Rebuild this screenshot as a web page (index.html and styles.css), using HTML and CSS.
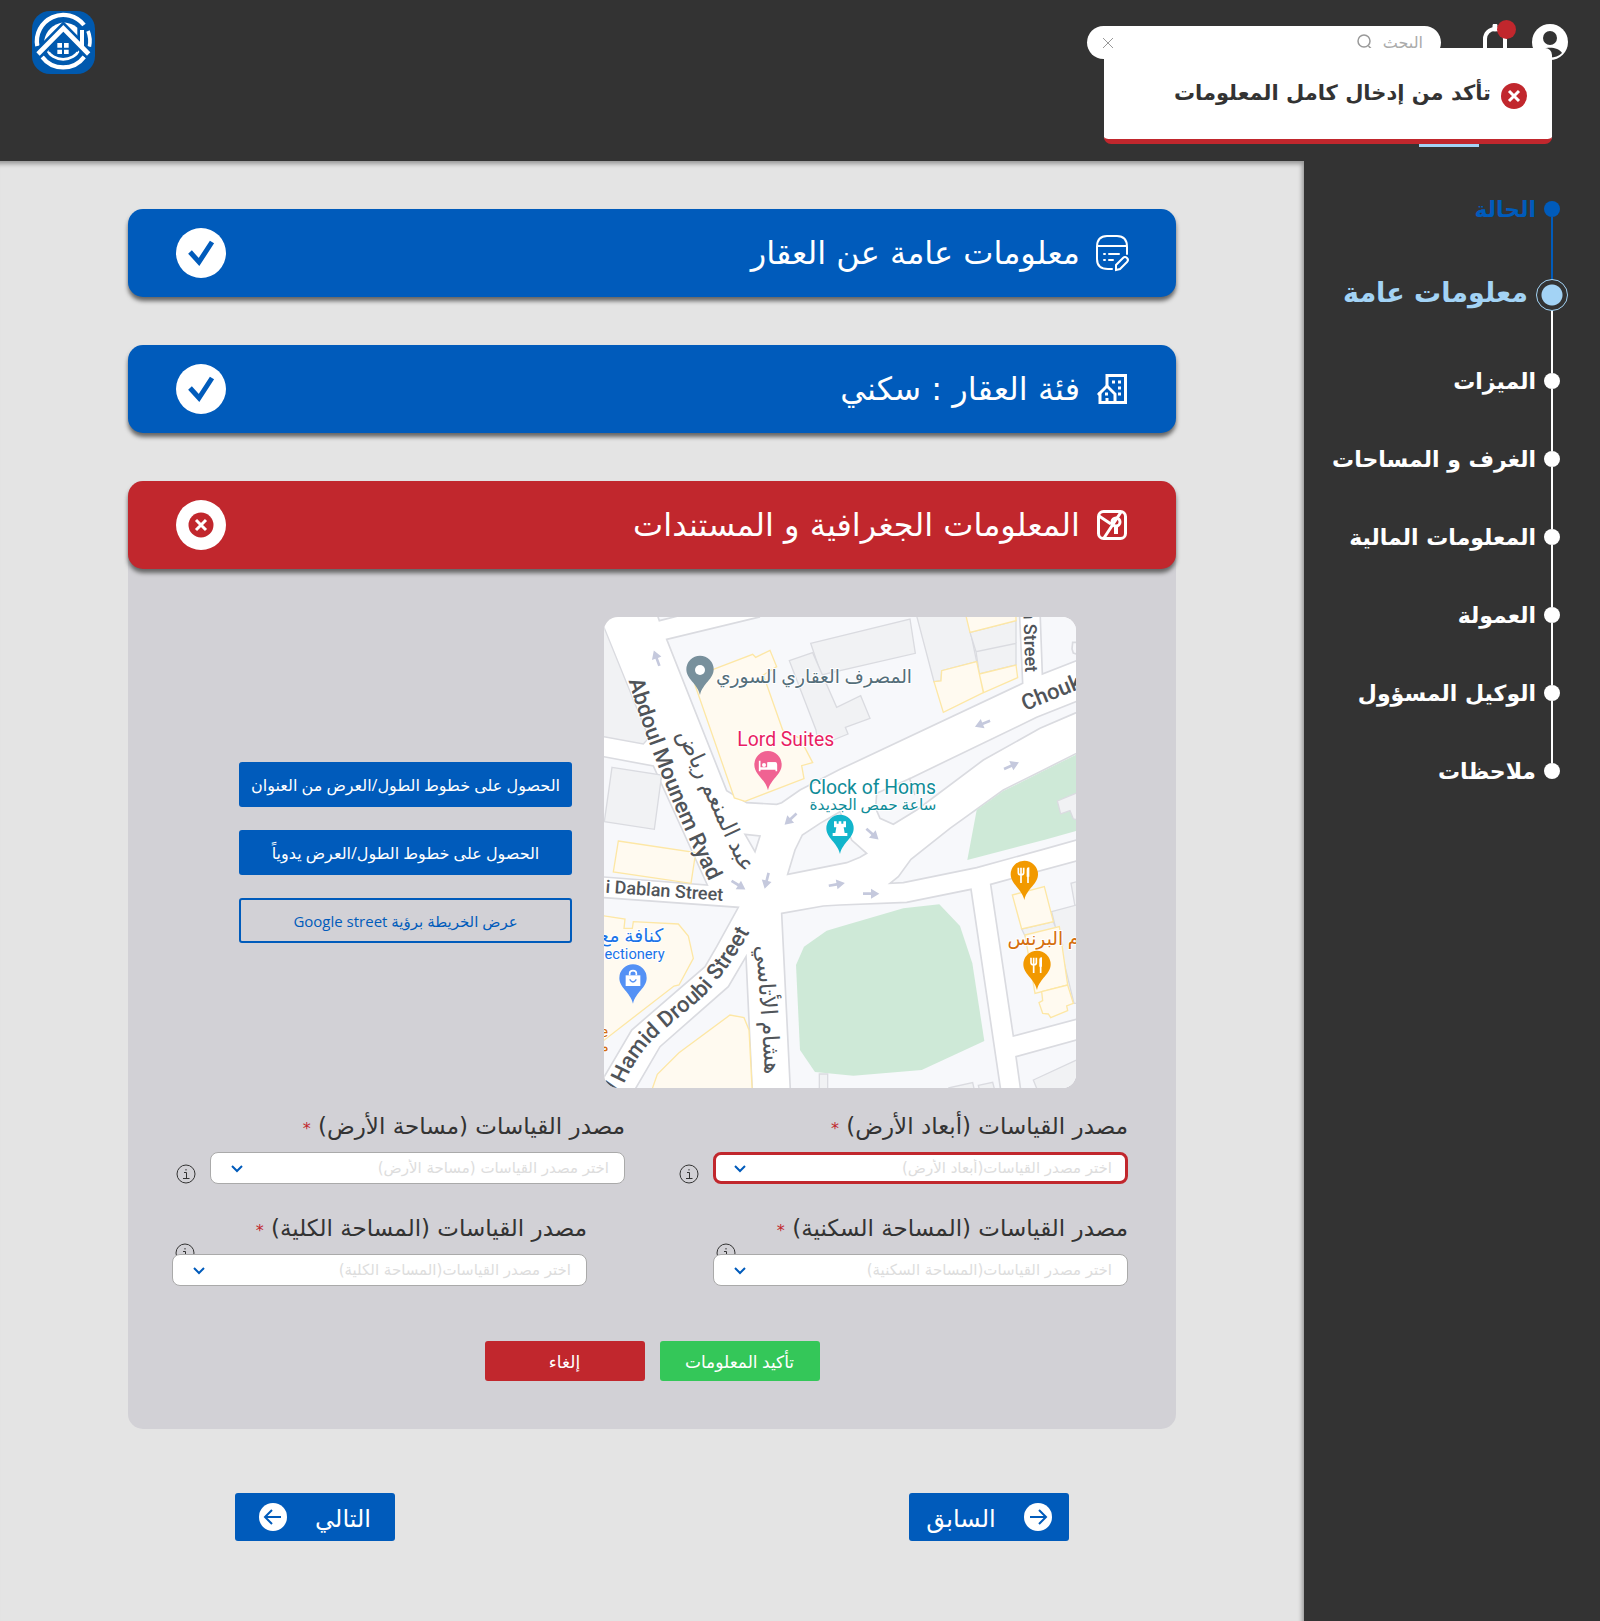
FILE: index.html
```html
<!DOCTYPE html>
<html lang="ar" dir="rtl">
<head>
<meta charset="utf-8">
<meta name="viewport" content="width=device-width, initial-scale=1">
<title>معلومات عامة</title>
<link rel="stylesheet" href="styles.css">
</head>
<body>
<header class="topbar">
  <div class="tools">
    <a class="avatar" href="#" aria-label="account">
      <svg viewBox="0 0 36 36"><circle cx="18" cy="18" r="18" fill="#fff"/><circle cx="18" cy="14" r="7" fill="#333"/><path d="M6 29c4-7 20-7 24 0-6 6-18 6-24 0z" fill="#333"/></svg>
    </a>
    <button class="bell" type="button" aria-label="notifications">
      <svg viewBox="0 0 24 34" fill="none" stroke="#fff" stroke-width="4"><path d="M2 30V15a10 10 0 0 1 20 0v15"/><path d="M12 2v3" stroke-width="5" stroke-linecap="round"/></svg>
      <span class="badge"></span>
    </button>
    <form class="search">
      <input class="search-input" type="text" placeholder="البحث" aria-label="search">
      <svg class="search-icon" viewBox="0 0 16 16" fill="none" stroke="#999" stroke-width="1.500"><circle cx="7" cy="7" r="6"/><path d="M11.500 12l3.500 3.500"/></svg>
      <button class="clear" type="button" aria-label="clear"><svg viewBox="0 0 10 10" fill="none" stroke="#999"><path d="M0 0l10 10M10 0L0 10"/></svg></button>
    </form>
  </div>
  <a class="logo" href="#" aria-label="home">
    <svg viewBox="0 0 189 189">
      <rect width="189" height="189" rx="54" fill="#0059ae"/>
      <g fill="none" stroke="#fff">
        <path d="M16 105A79 79 0 0 1 156 42" stroke-width="13"/>
        <path d="M168 60A79 79 0 0 1 172 107" stroke-width="11"/>
        <path d="M30 137A79 79 0 0 0 157 137" stroke-width="13"/>
        <path d="M46 116A50 42 0 0 0 141 116" stroke-width="8"/>
      </g>
      <path d="M36 90Q46 42 94 34q26 3 42 16v30z" fill="#fff"/>
      <path d="M12 135L94 52l82 83" fill="none" stroke="#0059ae" stroke-width="30"/>
      <path d="M50 108l44-44 44 44v14H50z" fill="#0059ae"/>
      <path d="M18 129L94 52l76 77" fill="none" stroke="#fff" stroke-width="14"/>
      <path d="M150 57v49" stroke="#fff" stroke-width="12"/>
      <path d="M76 96h14v14H76zM96 96h14v14H96zM76 116h14v13H76zM96 116h14v13H96z" fill="#fff"/>
    </svg>
  </a>
  <span class="tab-line"></span>
  <div class="toast" role="alert">
    <svg class="toast-icon" viewBox="0 0 26 26"><circle cx="13" cy="13" r="13" fill="#c1272d"/><path d="M8 8l10 10M18 8L8 18" stroke="#fff" stroke-width="3"/></svg>
    <p class="toast-text">تأكد من إدخال كامل المعلومات</p>
  </div>
</header>

<div class="layout">
  <aside class="sidebar">
    <ol class="steps">
      <li class="step done"><span class="dot"></span><span class="step-text">الحالة</span></li>
      <li class="step active"><span class="dot"></span><span class="step-text">معلومات عامة</span></li>
      <li class="step"><span class="dot"></span><span class="step-text">الميزات</span></li>
      <li class="step"><span class="dot"></span><span class="step-text">الغرف و المساحات</span></li>
      <li class="step"><span class="dot"></span><span class="step-text">المعلومات المالية</span></li>
      <li class="step"><span class="dot"></span><span class="step-text">العمولة</span></li>
      <li class="step"><span class="dot"></span><span class="step-text">الوكيل المسؤول</span></li>
      <li class="step"><span class="dot"></span><span class="step-text">ملاحظات</span></li>
    </ol>
  </aside>

  <main class="content">
    <section class="bar">
      <svg class="bar-icon" viewBox="0 0 32 32" fill="none" stroke="#fff" stroke-width="2" stroke-linecap="round"><path d="M16 32h-4Q1 32 1 22V10Q1-1 11-1h10q10 0 10 11v7M1 9h30M13 17h10M13 23h4M8 17h1M8 23h1"/><path d="M20 33v-5l7-7q2-2 4 0 2 2 0 4l-7 7z"/></svg>
      <h2 class="bar-title">معلومات عامة عن العقار</h2>
      <svg class="status" viewBox="0 0 50 50"><circle cx="25" cy="25" r="25" fill="#fff"/><path d="M14 24l9 10 13-20" fill="none" stroke="#005bbb" stroke-width="5"/></svg>
    </section>
    <section class="bar">
      <svg class="bar-icon" viewBox="0 0 32 32" fill="none" stroke="#fff" stroke-width="3"><path d="M11 13V2.500h18.500v27H4V19"/><path d="M2 22l9-9 8 8v8M11 25v5"/><path d="M16 9h3M22 9h3M22 15h3M22 21h3M9 21h3"/></svg>
      <h2 class="bar-title">فئة العقار : سكني</h2>
      <svg class="status" viewBox="0 0 50 50"><circle cx="25" cy="25" r="25" fill="#fff"/><path d="M14 24l9 10 13-20" fill="none" stroke="#005bbb" stroke-width="5"/></svg>
    </section>

    <section class="panel">
      <div class="bar bar-error">
        <svg class="bar-icon" viewBox="0 0 32 32" fill="none" stroke="#fff" stroke-width="3"><rect x="2.500" y="2.500" width="27" height="27" rx="5"/><path d="M3 7l12 8M8 29L25 3"/><circle cx="20" cy="13" r="4"/><path d="M20 17v8" stroke-width="4"/></svg>
        <h2 class="bar-title">المعلومات الجغرافية و المستندات</h2>
        <svg class="status" viewBox="0 0 50 50"><circle cx="25" cy="25" r="25" fill="#fff"/><circle cx="25" cy="25" r="12.500" fill="#c1272d"/><path d="M20 20l10 10M30 20L20 30" stroke="#fff" stroke-width="3"/></svg>
      </div>
      <div class="panel-body">
        <div class="map-row">
          <svg class="map" viewBox="12 21 1416 1413" preserveAspectRatio="xMidYMid slice" role="img" aria-label="map">
            <defs>
              <path id="pin" d="M0 77C-8 42-41 30-41 0A41 41 0 1 1 41 0C41 30 8 42 0 77z"/>
              <path id="arrow" d="M-24-4H0V-15L25 0 0 15V4H-24z"/>
              <path id="abdoul" d="M86 212Q170 500 350 860"/>
              <path id="droubi" d="M50 1448L78 1408Q120 1320 182 1268L272 1192Q370 1120 482 905"/>
            </defs>
            <rect width="1440" height="1440" fill="#fff"/>
            <g class="block">
              <path d="M0 22L137 360l8 25-15 17L0 378z" class="building"/>
              <path d="M0 438l160 30 162 357L0 800z"/>
              <path d="M200 88L478 21V0h780l10 220L720 478 600 540l-55 38-15 5-90-5-60-36z"/>
              <path d="M172 15l6 17 60-15"/>
              <path d="M1320 0l7 192 113-44V0z"/>
              <path d="M1440 97l-22 0-2 20 4 12 20 6"/>
              <path d="M830 550l105-47 375-181 130-52v33l-120 52-170 95-200 150-70 43-40-18-13-30zM928 503l17 52"/>
              <path d="M563 793l22-73 22-45 53-35 60-35 35 85 45 40-20 12-40 16z"/>
              <path d="M870 820l25-20 38-52 117-93 160-115 110-55 120-60v262l-100 28-210 58-220 45z"/>
              <path d="M545 910l125-22 50-3 200-8 193-39 92 622H572z"/>
              <path d="M1172 823l268-73v475l-200 53z"/>
              <path d="M1248 1340l192-53v160h-177z"/>
              <path d="M0 862l415 30-65 118-35 60-220 190-95 162z"/>
              <path d="M438 1040l-53 90-205 180-80 137h357z"/>
              <path d="M435 673l45 5-15 47z"/>
            </g>
            <g fill="#cee9d7">
              <path d="M1130 600l80-57 230-115v232l-100 28-238 62z"/>
              <path d="M588 1065l24-55 68-48 40-12 190-55 108-12 62 65 37 112 36 233-188 87-205 17-115-11-45-66z"/>
            </g>
            <g class="building">
              <path d="M36 472l149 23-22 163-150-23z"/>
              <path d="M632 100l298-73 16 103-282 65z"/>
              <path d="M568 152l70-24 72 164 72-35 28 68-74 27 8 20-89 36-7-48z"/>
              <path d="M948 10h152l30 145-105 27-2 31-21 2z"/>
              <path d="M1110 67l138-35v68l-120 25zM1128 125l120-25v65l-110 27z"/>
              <path d="M1372 573l68-28v85l-20-3-10-25-28 10z"/>
              <path d="M1265 957l95-22 28 70-90 20zM1355 905l85-23v298h-18zM1440 812l-27 8 12 68"/>
              <path d="M1300 1410l140-65v95h-128z"/>
              <path d="M658 1392h25v52h-25zM1045 1434l73-16 6 26zM1135 1426l43-9 8 30-46 0z"/>
            </g>
            <g class="shop">
              <path d="M340 178l118-45 9 9 43-21 20 49-40 25 58 165 52 25 38 73-33 9 7 39-177 68-32-10L285 225z"/>
              <path d="M55 693l232 35-14 92-233-34z"/>
              <path d="M1002 215l21-2 2-31 105-27 20 93-120 59zM1096 10h152v22l-138 35zM1138 192l110-27 5 38-102 45z"/>
              <path d="M1237 855l96-25 27 105-95 22zM1275 975l103-25 25 175-98 25z"/>
              <path d="M1325 1145l78-20 17 55-20 8 3 14-51 21-7-11-17-2-11-32 11-6z"/>
              <path d="M0 916l75 11-3 28 25 0 3-20 135 7 30 36 15 67-43 80-15 3L0 1300z"/>
              <path d="M152 1450l20-57 65-65 153-113 42 8 15 37 10 190z"/>
            </g>
            <g fill="#c5c9dd">
              <use href="#arrow" transform="translate(170 145) rotate(-110)"/>
              <use href="#arrow" transform="translate(572 627) rotate(137)"/>
              <use href="#arrow" transform="translate(1148 341) rotate(158)"/>
              <use href="#arrow" transform="translate(1234 467) rotate(-24)"/>
              <use href="#arrow" transform="translate(817 672) rotate(42)"/>
              <use href="#arrow" transform="translate(415 825) rotate(32)"/>
              <use href="#arrow" transform="translate(500 812) rotate(104)"/>
              <use href="#arrow" transform="translate(710 823) rotate(-10)"/>
              <use href="#arrow" transform="translate(813 851)"/>
            </g>
            <g class="street">
              <text><textPath href="#abdoul">Abdoul Mounem Ryad</textPath></text>
              <text><textPath href="#droubi">l Hamid Droubi Street</textPath></text>
              <text class="small" transform="translate(16 848) rotate(4)">i Dablan Street</text>
              <text class="small" transform="translate(1276 187) rotate(88)" text-anchor="end">n Street</text>
              <text class="wide" transform="translate(1275 303) rotate(-22)">Chouk</text>
              <text class="ar" transform="translate(328 580) rotate(65)" text-anchor="middle">عبد المنعم رياض</text>
              <text class="ar" transform="translate(482 1200) rotate(86)" text-anchor="middle">هشام الأتاسي</text>
            </g>
            <g class="place">
              <text class="ar bank" x="642" y="218" text-anchor="middle">المصرف العقاري السوري</text>
              <text class="hotel" x="412" y="407">Lord Suites</text>
              <text class="clock" x="626" y="552">Clock of Homs</text>
              <text class="ar-small clock" x="819" y="600" text-anchor="middle">ساعة حمص الجديدة</text>
              <text class="ar sweets" x="190" y="996" text-anchor="end">كنافة مع</text>
              <text class="latin-small sweets" x="194" y="1048" text-anchor="end">ectionery</text>
              <text class="ar food" x="1438" y="1006" text-anchor="end">م البرنس</text>
              <text class="latin-small food" x="24" y="1281" text-anchor="end">e</text>
              <text class="ar-small food" x="26" y="1325" text-anchor="end">م</text>
            </g>
            <use href="#pin" x="300" y="178" fill="#78909c"/><circle cx="300" cy="180" r="15" fill="#fff"/>
            <use href="#pin" x="504" y="464" fill="#f06292"/><path d="M479 452v32M479 477h50M529 484v-20q0-5-5-5h-20v15h-24" fill="none" stroke="#fff" stroke-width="5"/><path d="M504 457h25v20h-25z" fill="#fff"/><circle cx="492" cy="465" r="6" fill="#fff"/>
            <use href="#pin" x="720" y="655" fill="#12b5cb"/><path d="M702 634h8v7h6v-7h8v7h6v-7h8v18h-7l3 17h8v9h-44v-9h8l3-17h-7z" fill="#fff"/>
            <use href="#pin" x="99" y="1104" fill="#5491f5"/><path d="M77 1096h44v32H77z" fill="#fff"/><path d="M89 1096v-6q0-8 10-8t10 8v6" fill="none" stroke="#fff" stroke-width="5"/><path d="M89 1108q10 16 20 0" fill="none" stroke="#5491f5" stroke-width="4"/>
            <g id="food-pin"><use href="#pin" x="1273" y="793" fill="#f29900"/><path d="M1255 773v15q0 6 8 6t8-6v-15M1263 773v46M1284 819v-46" fill="none" stroke="#fff" stroke-width="5"/><path d="M1280 800v-20q0-8 8-8v28z" fill="#fff"/></g>
            <use href="#food-pin" x="38" y="270"/>
          </svg>
          <div class="map-actions">
            <button class="btn" type="button">الحصول على خطوط الطول/العرض من العنوان</button>
            <button class="btn" type="button">الحصول على خطوط الطول/العرض يدوياً</button>
            <button class="btn outline" type="button">عرض الخريطة برؤية Google street</button>
          </div>
        </div>

        <div class="fields">
          <div class="field">
            <label for="dim">مصدر القياسات (أبعاد الأرض) <span class="req">*</span></label>
            <div class="control">
              <span class="select invalid"><select id="dim"><option>اختر مصدر القياسات(أبعاد الأرض)</option></select><svg class="chevron" viewBox="0 0 12 8"><path d="M1 1l5 5 5-5"/></svg></span>
              <svg class="info" viewBox="0 0 20 20"><circle cx="10" cy="10" r="9"/><path d="M8 8.500h2.500V14M7 14.500h6.500M10 5v1.500"/></svg>
            </div>
          </div>
          <div class="field">
            <label for="land">مصدر القياسات (مساحة الأرض) <span class="req">*</span></label>
            <div class="control">
              <span class="select"><select id="land"><option>اختر مصدر القياسات (مساحة الأرض)</option></select><svg class="chevron" viewBox="0 0 12 8"><path d="M1 1l5 5 5-5"/></svg></span>
              <svg class="info" viewBox="0 0 20 20"><circle cx="10" cy="10" r="9"/><path d="M8 8.500h2.500V14M7 14.500h6.500M10 5v1.500"/></svg>
            </div>
          </div>
        </div>
        <div class="fields fields-narrow">
          <div class="field">
            <label for="living">مصدر القياسات (المساحة السكنية) <span class="req">*</span></label>
            <div class="control">
              <svg class="info tucked" viewBox="0 0 20 20"><circle cx="10" cy="10" r="9"/><path d="M8 8.500h2.500V14M7 14.500h6.500M10 5v1.500"/></svg>
              <span class="select"><select id="living"><option>اختر مصدر القياسات(المساحة السكنية)</option></select><svg class="chevron" viewBox="0 0 12 8"><path d="M1 1l5 5 5-5"/></svg></span>
            </div>
          </div>
          <div class="field">
            <label for="total">مصدر القياسات (المساحة الكلية) <span class="req">*</span></label>
            <div class="control">
              <svg class="info tucked" viewBox="0 0 20 20"><circle cx="10" cy="10" r="9"/><path d="M8 8.500h2.500V14M7 14.500h6.500M10 5v1.500"/></svg>
              <span class="select"><select id="total"><option>اختر مصدر القياسات(المساحة الكلية)</option></select><svg class="chevron" viewBox="0 0 12 8"><path d="M1 1l5 5 5-5"/></svg></span>
            </div>
          </div>
        </div>

        <div class="confirm">
          <button class="btn ok" type="submit">تأكيد المعلومات</button>
          <button class="btn cancel" type="button">إلغاء</button>
        </div>
      </div>
    </section>

    <nav class="pager">
      <button class="btn page" type="button">
        <svg viewBox="0 0 28 28"><circle cx="14" cy="14" r="14" fill="#fff"/><path d="M6 14h16M15 7l7 7-7 7" fill="none" stroke="#005bbb" stroke-width="2"/></svg>
        <span>السابق</span>
      </button>
      <button class="btn page" type="button">
        <span>التالي</span>
        <svg viewBox="0 0 28 28"><circle cx="14" cy="14" r="14" fill="#fff"/><path d="M22 14H6M13 7l-7 7 7 7" fill="none" stroke="#005bbb" stroke-width="2"/></svg>
      </button>
    </nav>
  </main>
</div>
</body>
</html>
```
FILE: styles.css
```css
* { box-sizing: border-box; }

body {
  margin: 0;
  background: #333;
  color: #333;
  font-family: "DejaVu Sans", sans-serif;
}

button, input, select { font-family: inherit; }
button { cursor: pointer; }

.topbar {
  position: relative;
  display: flex;
  justify-content: space-between;
  height: 161px;
  padding: 11px 32px 0;
}
.tools { display: flex; align-items: flex-start; padding-top: 13px; }
.avatar, .avatar svg { display: block; width: 36px; height: 36px; }
.bell {
  position: relative;
  width: 24px;
  height: 34px;
  margin-right: 25px;
  padding: 0;
  border: 0;
  background: none;
}
.bell svg { display: block; width: 24px; height: 34px; }
.badge {
  position: absolute;
  top: -4px;
  right: -9px;
  width: 19px;
  height: 19px;
  border-radius: 50%;
  background: #c1272d;
}
.search {
  display: flex;
  align-items: center;
  width: 354px;
  height: 33px;
  margin: 2px 42px 0 0;
  padding: 0 18px 0 16px;
  border-radius: 17px;
  background: #fff;
}
.search-input {
  width: 50px;
  padding: 0;
  border: 0;
  outline: 0;
  background: none;
  font-size: 16px;
}
.search-input::placeholder { color: #aaa; opacity: 1; }
.search-icon { width: 16px; height: 16px; margin: 0 0 2px auto; }
.clear { width: 10px; height: 10px; padding: 0; border: 0; background: none; }
.clear svg { display: block; width: 10px; height: 10px; }
.logo svg { display: block; width: 63px; height: 63px; }

.tab-line {
  position: absolute;
  top: 144px;
  right: 121px;
  width: 60px;
  height: 3px;
  background: #a3d3f5;
}
.toast {
  position: absolute;
  top: 48px;
  right: 48px;
  display: flex;
  align-items: center;
  gap: 10px;
  width: 448px;
  height: 96px;
  padding: 5px 25px 0;
  border-bottom: 5px solid #c1272d;
  border-radius: 7px;
  background: #fff;
}
.toast-icon { width: 26px; height: 26px; }
.toast-text { margin: 0 0 6px; font-size: 21px; font-weight: bold; white-space: nowrap; }

.layout { display: grid; grid-template-columns: 296px 1fr; }
.sidebar { padding: 40px 32px 0 16px; }
.steps {
  display: flex;
  flex-direction: column;
  gap: 62px;
  margin: 0;
  padding: 0;
  list-style: none;
}
.step {
  position: relative;
  display: flex;
  align-items: center;
  gap: 8px;
  height: 16px;
  padding-right: 8px;
  color: #fff;
  font-size: 22px;
  font-weight: bold;
  white-space: nowrap;
}
.step + .step::before {
  content: "";
  position: absolute;
  bottom: 100%;
  right: 15px;
  width: 2px;
  height: 62px;
  background: #fff;
}
.dot { flex: none; width: 16px; height: 16px; border-radius: 50%; background: currentColor; }
.step.done { color: #005bbb; }
.step.active { height: 32px; padding-right: 0; color: #a3d3f5; font-size: 27px; }
.step.active::before { background: #005bbb; }
.active .dot {
  width: 32px;
  height: 32px;
  border: 1px solid #a3d3f5;
  background: radial-gradient(circle, #a3d3f5 0 10px, transparent 11px);
}
.active .step-text { padding-bottom: 6px; }

.content {
  padding: 48px 128px 80px;
  background: #e4e4e4;
  box-shadow: inset 0 7px 4px -4px #999, inset -6px 0 4px -4px #999;
}
.bar {
  display: flex;
  align-items: center;
  gap: 16px;
  height: 88px;
  margin-bottom: 48px;
  padding: 0 48px;
  border-radius: 15px;
  background: #005bbb;
  box-shadow: 0 4px 4px #666;
  color: #fff;
}
.bar-error { margin: 0; background: #c1272d; }
.bar-icon { width: 32px; height: 32px; overflow: visible; }
.bar-title { margin: 0; font-size: 32px; font-weight: normal; white-space: nowrap; }
.status { width: 50px; height: 50px; margin-right: auto; }

.panel { border-radius: 15px; background: #d2d1d6; }
.panel-body { padding: 48px; }
.map-row { display: flex; align-items: center; gap: 32px; padding-right: 52px; }
.map { display: block; width: 472px; height: 471px; border-radius: 14px; direction: ltr; }
.block { fill: #f7f8fb; stroke: #dadbe0; stroke-width: 5; }
.building { fill: #f1f2f4; stroke: #dadbe0; stroke-width: 4; }
.shop { fill: #fffaf0; stroke: #fde7a5; stroke-width: 4; }
.map text { font-family: Roboto, "DejaVu Sans", sans-serif; paint-order: stroke; stroke: #fff; stroke-width: 6px; }
.street { fill: #505459; font-size: 66px; font-weight: 500; }
.street .small { font-size: 54px; }
.place { font-size: 58px; }
.map .ar { font-size: 56px; font-weight: 400; }
.map .street .ar { font-size: 68px; }
.map .ar-small { font-size: 46px; }
.latin-small { font-size: 44px; }
.bank { fill: #546e7a; }
.hotel { fill: #e91e63; }
.clock { fill: #0f8c98; }
.sweets { fill: #1a73e8; }
.food { fill: #d56e0c; }

.map-actions { display: flex; flex-direction: column; gap: 23px; width: 333px; }
.btn {
  height: 45px;
  padding: 0;
  border: 0;
  border-radius: 3px;
  background: #005bbb;
  color: #fff;
  font-family: "Open Sans", "DejaVu Sans", sans-serif;
  font-size: 16px;
  white-space: nowrap;
}
.outline { border: 2px solid #005bbb; background: none; color: #005bbb; font-size: 15px; }

.fields { display: flex; justify-content: space-between; margin-top: 24px; }
.fields-narrow { margin: 30px 0 0 -4px; }
.fields-narrow .field { width: 415px; }
.fields-narrow .field + .field { margin-right: auto; }
.field { width: 449px; }
.field label { display: block; height: 28px; margin-bottom: 12px; font-size: 23px; line-height: 28px; white-space: nowrap; }
.req { color: #c1272d; font-size: 16px; }
.control { position: relative; display: flex; align-items: flex-end; justify-content: space-between; }
.select { position: relative; display: block; width: 415px; }
.select select {
  display: block;
  width: 100%;
  height: 32px;
  padding: 0 15px;
  border: 1px solid #aaa;
  border-radius: 8px;
  appearance: none;
  background: #fff;
  color: #ddd;
  font-size: 15px;
}
.invalid select { border: 3px solid #c1272d; padding: 0 13px; }
.chevron { position: absolute; top: 13px; left: 21px; width: 12px; height: 8px; fill: none; stroke: #005bbb; stroke-width: 2; }
.info { width: 20px; height: 20px; fill: none; stroke: #333; stroke-width: 1; }
.tucked { position: absolute; top: -11px; left: 3px; }

.confirm { display: flex; justify-content: center; gap: 15px; margin-top: 55px; }
.confirm .btn { width: 160px; height: 40px; font-size: 17px; }
.confirm .ok { background: #34c759; }
.confirm .cancel { background: #c1272d; }

.pager { display: flex; justify-content: space-between; margin-top: 64px; padding: 0 107px; }
.page { display: flex; align-items: center; justify-content: center; gap: 28px; width: 160px; height: 48px; font-size: 24px; }
.page svg { width: 28px; height: 28px; }
```
